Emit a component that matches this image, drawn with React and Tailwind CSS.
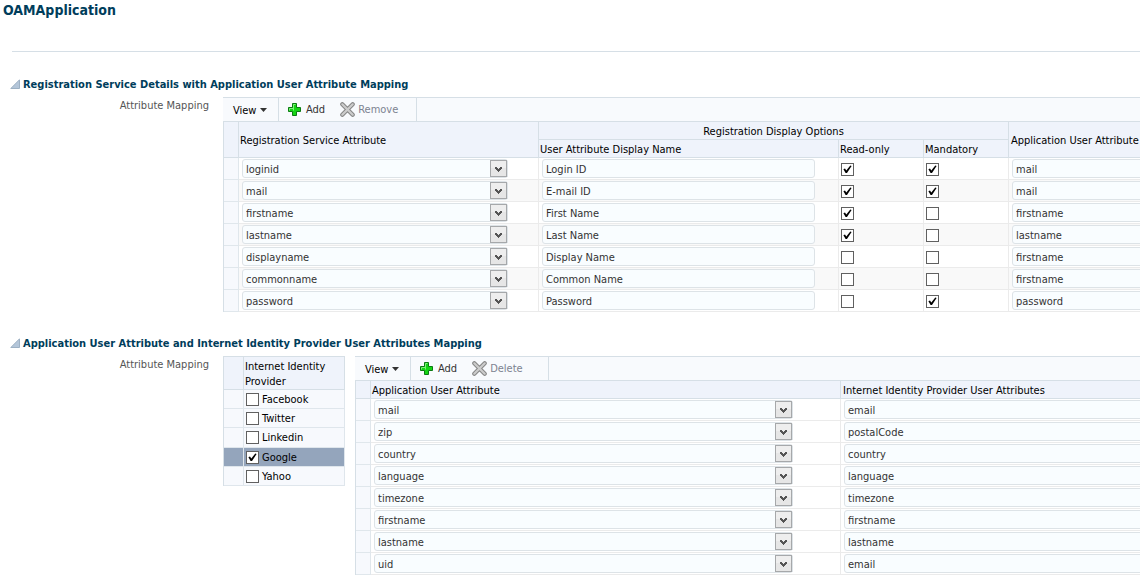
import React, { useState } from "react";

const registrationRows = [
  { attr: "loginid", label: "Login ID", readOnly: true, mandatory: true, app: "mail" },
  { attr: "mail", label: "E-mail ID", readOnly: true, mandatory: true, app: "mail" },
  { attr: "firstname", label: "First Name", readOnly: true, mandatory: false, app: "firstname" },
  { attr: "lastname", label: "Last Name", readOnly: true, mandatory: false, app: "lastname" },
  { attr: "displayname", label: "Display Name", readOnly: false, mandatory: false, app: "firstname" },
  { attr: "commonname", label: "Common Name", readOnly: false, mandatory: false, app: "firstname" },
  { attr: "password", label: "Password", readOnly: false, mandatory: true, app: "password" },
];

const providerRows = [
  ["mail", "email"],
  ["zip", "postalCode"],
  ["country", "country"],
  ["language", "language"],
  ["timezone", "timezone"],
  ["firstname", "firstname"],
  ["lastname", "lastname"],
  ["uid", "email"],
];

const providers = ["Facebook", "Twitter", "Linkedin", "Google", "Yahoo"];

function Checkbox({ label, defaultChecked }) {
  return (
    <span className="relative block size-[13px] shrink-0">
      <input
        type="checkbox"
        aria-label={label}
        defaultChecked={defaultChecked}
        className="peer block size-[13px] appearance-none border border-[#606060] bg-white"
      />
      <svg
        viewBox="0 0 13 13"
        className="pointer-events-none invisible absolute inset-0 size-[13px] peer-checked:visible"
        aria-hidden="true"
      >
        <path d="M2.4 6.3 L4 5.6 L5.3 7.6 L9.3 2.4 L10.6 3.1 L6 10 L4.6 10 Z" fill="#000" />
      </svg>
    </span>
  );
}

const field =
  "block h-[19px] w-full appearance-none rounded-[3px] border border-[#dde3e7] bg-[#f9fdff] px-[3px] pt-[2px] text-[11px] leading-[15px] text-[#333]";

function Select({ label, value }) {
  return (
    <div className="relative h-[19px] w-full">
      <select aria-label={label} defaultValue={value} className={field}>
        <option>{value}</option>
      </select>
      <svg
        viewBox="0 0 18 18"
        className="pointer-events-none absolute right-0 top-px h-[18px] w-[18px]"
        aria-hidden="true"
      >
        <rect x="0.5" y="0.5" width="16" height="16" fill="#e6e6e6" stroke="#a6a8aa" />
        <rect x="1" y="1" width="15" height="7" fill="#eeeeee" />
        <path d="M17.5 1 V17" stroke="#dde3e7" />
        <path d="M5 7 H7 V8 H8 V9 H9 V8 H10 V7 H12 V9 H11 V10 H10 V11 H9 V12 H8 V11 H7 V10 H6 V9 H5 Z" fill="#555" />
      </svg>
    </div>
  );
}

function TextField({ label, value }) {
  return <input type="text" aria-label={label} defaultValue={value} className={field} />;
}

function PlusIcon() {
  return (
    <svg viewBox="0 0 15 15" className="size-[15px]" aria-hidden="true">
      <path d="M5.5 1.5 H9.5 V5.5 H13.5 V9.5 H9.5 V13.5 H5.5 V9.5 H1.5 V5.5 H5.5 Z" fill="#14d414" stroke="#0b7a12" strokeLinejoin="round" />
      <path d="M6.5 8.5 V2.5 H8.5 M2.5 8.5 V6.5 H6.5" fill="none" stroke="#7df07a" />
    </svg>
  );
}

function CrossIcon() {
  return (
    <svg viewBox="0 0 15 15" className="size-[15px]" aria-hidden="true">
      <path d="M2.3 2.3 L12.7 12.7 M12.7 2.3 L2.3 12.7" stroke="#858585" strokeWidth="4.2" strokeLinecap="round" />
      <path d="M2.3 2.3 L12.7 12.7 M12.7 2.3 L2.3 12.7" stroke="#cccccc" strokeWidth="2.2" strokeLinecap="round" />
    </svg>
  );
}

function Toolbar({ removeLabel }) {
  return (
    <div className="flex h-6 border-t border-[#d6dfe6] bg-[#f8fafd]">
      <button type="button" className="flex w-14 items-center gap-1 border-r border-[#d6dfe6] pl-[10px] pt-px text-black">
        <span className="pt-[2px]">View</span>
        <svg viewBox="0 0 7 4" className="h-1 w-[7px]" aria-hidden="true">
          <path d="M0 0 H7 L3.5 4 Z" fill="#333" />
        </svg>
      </button>
      <div className="flex items-center border-r border-[#d6dfe6] pl-2 pr-4">
        <button type="button" className="flex items-center gap-1 text-[#333]">
          <PlusIcon />
          <span className="pt-[2px]">Add</span>
        </button>
        <button type="button" disabled className="ml-[15px] flex w-[60px] items-center gap-[3px] text-[#7d8391]">
          <span className="shrink-0">
            <CrossIcon />
          </span>
          <span className="pt-[2px]">{removeLabel}</span>
        </button>
      </div>
    </div>
  );
}

function Section({ title, children }) {
  const [open, setOpen] = useState(true);
  return (
    <section>
      <h2 className="text-[11px] font-bold leading-[16px] text-[#003d5b]">
        <button type="button" aria-expanded={open} onClick={() => setOpen(!open)} className="flex items-start gap-[3px] pl-[10px]">
          <svg viewBox="0 0 10 10" className="mt-[2px] size-[10px]" aria-hidden="true">
            <path d="M0.8 9.5 L9.5 0.8 V9.5 Z" fill="#b4c6d9" stroke="#9db1c4" />
          </svg>
          {title}
        </button>
      </h2>
      {open && (
        <div className="mt-1 flex">
          <div className="w-[223px] shrink-0 pr-[14px] pt-[2px] text-right leading-[14px] text-[#555]">Attribute Mapping</div>
          {children}
        </div>
      )}
    </section>
  );
}

const thBase = "border-b border-[#d6dfe6] bg-[#eff3fb] p-0 pt-[2px] font-normal leading-[15px] text-black";
const th = thBase + " border-r pl-px text-left";
const thLast = thBase + " pl-[2px] text-left";
const gutter = "border-b border-r border-[#e0e7ec] bg-[#f7f9fd] p-0";
const td = "h-[22px] border-b border-r border-[#ebebeb] p-0 pl-[3px]";
const tdCheck = "h-[22px] border-b border-r border-[#ebebeb] p-0 pl-[2px] pt-[2px]";
const tdLast = "h-[22px] overflow-hidden border-b border-[#ebebeb] p-0 pl-[3px]";

export default function App() {
  return (
    <main className="min-w-[1100px] overflow-hidden bg-white font-['Tahoma','DejaVu_Sans_Condensed','DejaVu_Sans',sans-serif] text-[11px]">
      <h1 className="pl-[3px] pt-[1px] text-[14px] font-bold leading-[18px] text-[#003d5b]">OAMApplication</h1>
      <hr className="ml-3 mt-8 border-t border-[#d6dfe6]" />

      <div className="mt-[25px] flex flex-col gap-6">
        <Section title="Registration Service Details with Application User Attribute Mapping">
          <div className="min-w-0 flex-1 overflow-hidden">
            <Toolbar removeLabel="Remove" />
            <table className="w-full table-fixed border-separate border-spacing-0 border-l border-t border-[#d6dfe6]">
              <colgroup>
                <col className="w-[15px]" />
                <col className="w-[300px]" />
                <col className="w-[300px]" />
                <col className="w-[85px]" />
                <col className="w-[85px]" />
                <col />
              </colgroup>
              <thead>
                <tr className="h-[18px]">
                  <th rowSpan={2} className={th} aria-label="Row" />
                  <th rowSpan={2} className={th}>Registration Service Attribute</th>
                  <th colSpan={3} className={thBase + " border-r text-center"}>Registration Display Options</th>
                  <th rowSpan={2} className={thLast}>Application User Attribute</th>
                </tr>
                <tr className="h-[18px]">
                  <th className={th}>User Attribute Display Name</th>
                  <th className={th}>Read-only</th>
                  <th className={th}>Mandatory</th>
                </tr>
              </thead>
              <tbody>
                {registrationRows.map((r) => (
                  <tr key={r.attr} className="even:bg-[#f9f9f9]">
                    <td className={gutter} />
                    <td className={td}>
                      <div className="w-[266px]"><Select label={"Registration Service Attribute " + r.attr} value={r.attr} /></div>
                    </td>
                    <td className={td}>
                      <div className="w-[273px]"><TextField label={"Display name for " + r.attr} value={r.label} /></div>
                    </td>
                    <td className={tdCheck}>
                      <Checkbox label={r.label + " read-only"} defaultChecked={r.readOnly} />
                    </td>
                    <td className={tdCheck}>
                      <Checkbox label={r.label + " mandatory"} defaultChecked={r.mandatory} />
                    </td>
                    <td className={tdLast}>
                      <div className="w-[273px]"><TextField label={"Application attribute for " + r.attr} value={r.app} /></div>
                    </td>
                  </tr>
                ))}
              </tbody>
            </table>
          </div>
        </Section>

        <Section title="Application User Attribute and Internet Identity Provider User Attributes Mapping">
          <table className="h-[130px] w-[122px] shrink-0 table-fixed self-start border-separate border-spacing-0 border-l border-t border-[#d6dfe6]">
            <colgroup>
              <col className="w-[20px]" />
              <col />
            </colgroup>
            <thead>
              <tr>
                <th className={th} aria-label="Row" />
                <th className={th + " h-[33px]"}>Internet Identity Provider</th>
              </tr>
            </thead>
            <tbody>
              {providers.map((p) => (
                <tr key={p} className="bg-[#f7f9fd] has-checked:bg-[#94a5bc]">
                  <td className="h-[19px] border-b border-r border-[#dfe6ec] p-0" />
                  <td className="h-[19px] border-b border-r border-[#dfe6ec] p-0 pl-[2px]">
                    <label className="flex h-[18px] items-start gap-[3px] pt-[3px] leading-[14px] text-black">
                      <Checkbox label={p} defaultChecked={p === "Google"} />
                      {p}
                    </label>
                  </td>
                </tr>
              ))}
            </tbody>
          </table>

          <div className="ml-[10px] min-w-0 flex-1 overflow-hidden">
            <Toolbar removeLabel="Delete" />
            <table className="w-full table-fixed border-separate border-spacing-0 border-l border-t border-[#d6dfe6]">
              <colgroup>
                <col className="w-[15px]" />
                <col className="w-[470px]" />
                <col />
              </colgroup>
              <thead>
                <tr className="h-[18px]">
                  <th className={th} aria-label="Row" />
                  <th className={th}>Application User Attribute</th>
                  <th className={thLast}>Internet Identity Provider User Attributes</th>
                </tr>
              </thead>
              <tbody>
                {providerRows.map(([a, b]) => (
                  <tr key={a}>
                    <td className={gutter} />
                    <td className={td}>
                      <div className="w-[419px]"><Select label={"Application User Attribute " + a} value={a} /></div>
                    </td>
                    <td className={tdLast}>
                      <div className="w-[419px]"><TextField label={"Provider attribute for " + a} value={b} /></div>
                    </td>
                  </tr>
                ))}
              </tbody>
            </table>
          </div>
        </Section>
      </div>
    </main>
  );
}
